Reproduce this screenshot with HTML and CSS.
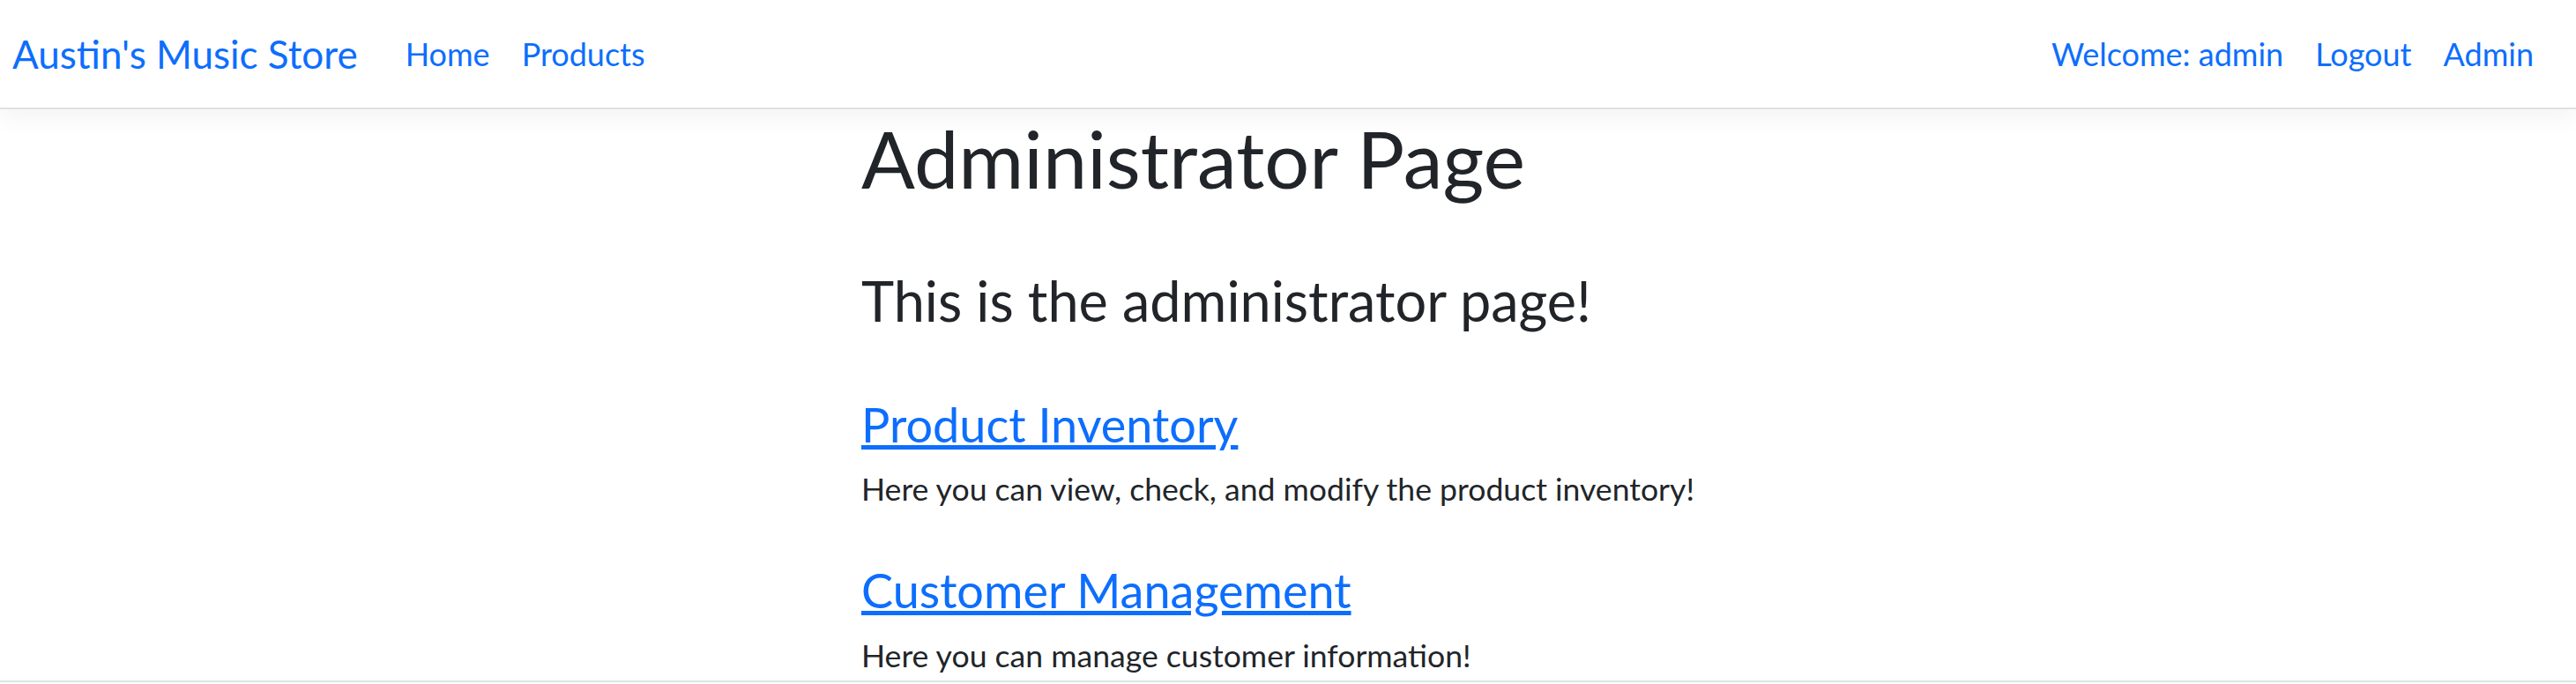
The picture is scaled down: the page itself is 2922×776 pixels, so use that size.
FILE: index.html
```html
<!DOCTYPE html>
<html lang="en">
<head>
<meta charset="utf-8">
<title>Administrator Page - Austin's Music Store</title>
<link rel="stylesheet" href="styles.css">
</head>
<body>
<header class="navbar">
  <div class="nav-left">
    <a class="brand" href="#">Austin's Music Store</a>
    <nav class="nav-links">
      <a class="nav-link" href="#">Home</a>
      <a class="nav-link" href="#">Products</a>
    </nav>
  </div>
  <nav class="nav-links">
    <a class="nav-link" href="#">Welcome: admin</a>
    <a class="nav-link" href="#">Logout</a>
    <a class="nav-link" href="#">Admin</a>
  </nav>
</header>
<main class="content">
  <h1 class="page-title">Administrator Page</h1>
  <h3 class="page-lead">This is the administrator page!</h3>
  <section class="admin-item">
    <h4 class="item-title"><a href="#">Product Inventory</a></h4>
    <p class="item-text">Here you can view, check, and modify the product inventory!</p>
  </section>
  <section class="admin-item">
    <h4 class="item-title"><a href="#">Customer Management</a></h4>
    <p class="item-text">Here you can manage customer information!</p>
  </section>
</main>
<footer class="footer"></footer>
</body>
</html>
```
FILE: styles.css
```css
html, body {
  margin: 0;
  padding: 0;
  background: #ffffff;
}
body {
  font-family: Lato, "Noto Sans", sans-serif;
  color: #212529;
  font-size: 36px;
  line-height: 1.5;
}
a {
  color: #0d6efd;
}
.navbar {
  height: 122px;
  border-bottom: 2px solid #dee2e6;
  box-shadow: 0 9px 27px rgba(0, 0, 0, 0.05);
  display: flex;
  align-items: center;
  justify-content: space-between;
  padding: 0 30px 0 14px;
}
.nav-left {
  display: flex;
  align-items: center;
}
.brand {
  font-size: 44px;
  line-height: 1.5;
  text-decoration: none;
  margin-right: 36px;
}
.nav-links {
  display: flex;
  align-items: center;
}
.nav-link {
  font-size: 36px;
  line-height: 1.5;
  padding: 0 18px;
  text-decoration: none;
}
.content {
  width: 968px;
  margin: 0 auto;
}
.page-title {
  font-size: 90px;
  font-weight: 400;
  line-height: 1.2;
  margin: 1px 0 0;
}
.page-lead {
  font-size: 63px;
  font-weight: 400;
  line-height: 1.2;
  margin: 70px 0 0;
}
.admin-item {
  margin-top: 56px;
}
.admin-item:first-of-type {
  margin-top: 71px;
}
.item-title {
  font-size: 54px;
  font-weight: 400;
  line-height: 1.2;
  margin: 0 0 14px;
}
.item-text {
  margin: 0;
  font-size: 35.6px;
}
.footer {
  margin-top: 2px;
  border-top: 2px solid #dee2e6;
}
```
